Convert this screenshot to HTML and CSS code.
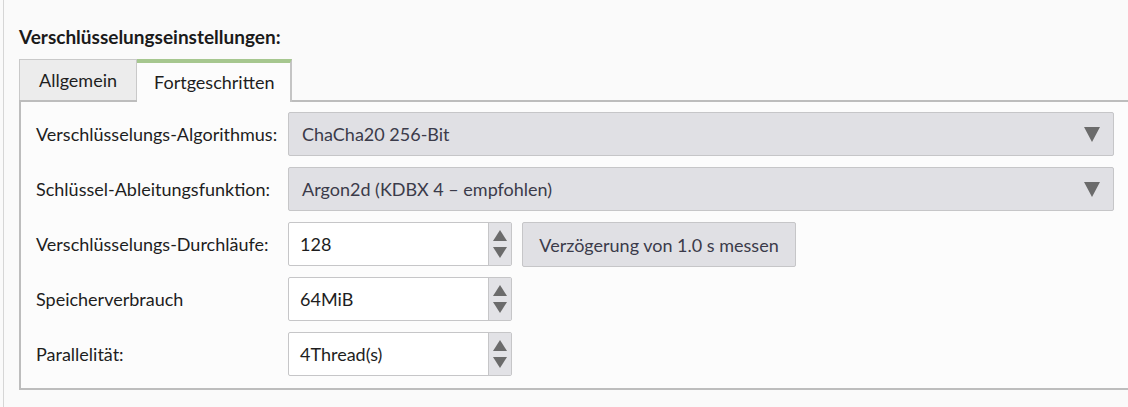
FILE: index.html
```html
<!DOCTYPE html>
<html lang="de">
  <head>
    <meta charset="UTF-8" />
    <meta name="viewport" content="width=device-width, initial-scale=1.0" />
    <title>Verschlüsselungseinstellungen</title>
    <link rel="stylesheet" href="styles.css">
  </head>
  <body>
    <div class="page">
      <h1 class="section-title">Verschlüsselungseinstellungen:</h1>

      <div class="tabs">
        <div class="tab">Allgemein</div>
        <div class="tab active">Fortgeschritten</div>
      </div>

      <div class="panel">
        <div class="form-grid">
          <label class="field-label">Verschlüsselungs-Algorithmus:</label>
          <div class="combo">
            <span>ChaCha20 256-Bit</span>
            <span class="combo-arrow"></span>
          </div>

          <label class="field-label">Schlüssel-Ableitungsfunktion:</label>
          <div class="combo">
            <span>Argon2d (KDBX 4 – empfohlen)</span>
            <span class="combo-arrow"></span>
          </div>

          <label class="field-label">Verschlüsselungs-Durchläufe:</label>
          <div class="row">
            <div class="spinbox">
              <span class="spin-value">128</span>
              <span class="spin-buttons"><i class="up"></i><i class="down"></i></span>
            </div>
            <button class="btn">Verzögerung von 1.0 s messen</button>
          </div>

          <label class="field-label">Speicherverbrauch</label>
          <div class="row">
            <div class="spinbox">
              <span class="spin-value">64MiB</span>
              <span class="spin-buttons"><i class="up"></i><i class="down"></i></span>
            </div>
          </div>

          <label class="field-label">Parallelität:</label>
          <div class="row">
            <div class="spinbox">
              <span class="spin-value">4Thread(s)</span>
              <span class="spin-buttons"><i class="up"></i><i class="down"></i></span>
            </div>
          </div>
        </div>
      </div>
    </div>
  </body>
</html>
```

FILE: styles.css
```css
body {
  margin: 0;
  background: #fafafa;
  font-family: Lato, "Liberation Sans", sans-serif;
  font-size: 18px;
  color: #1e1e1e;
  overflow: hidden;
  height: 407px;
}
.page {
  margin-left: 3px;
  border-left: 1px solid #d6d6d6;
  padding: 27px 0 0 15px;
  height: 380px;
  width: 1150px;
}
.section-title {
  margin: 0 0 12px 0;
  font-size: 19px;
  font-weight: bold;
  line-height: 20px;
  color: #1a1a1a;
}
.tabs {
  display: flex;
  height: 41px;
  position: relative;
  z-index: 1;
}
.tab {
  box-sizing: border-box;
  height: 41px;
  padding: 0 19px;
  display: flex;
  align-items: center;
  background: #ececec;
  border: 1px solid #c9c9c9;
  border-bottom: none;
}
.tab.active {
  height: 43px;
  background: #fcfcfc;
  border-top: 4px solid #a6c78f;
  border-left: none;
  border-right: 2px solid #c4c4c4;
  padding: 0 16px 2px 17px;
}
.panel {
  box-sizing: border-box;
  border: 2px solid #bdbdbd;
  background: #fcfcfc;
  width: 1130px;
  padding: 10px 0 12px 15px;
}
.form-grid {
  display: grid;
  grid-template-columns: 252px auto;
  grid-auto-rows: 44px;
  row-gap: 11px;
  align-items: center;
}
.field-label {
  white-space: nowrap;
}
.combo {
  box-sizing: border-box;
  width: 826px;
  height: 44px;
  background: #e0e0e4;
  border: 1px solid #c6c6c8;
  border-radius: 2px;
  display: flex;
  align-items: center;
  justify-content: space-between;
  padding: 0 13px 0 13px;
  color: #3b3b4a;
}
.combo-arrow {
  width: 0;
  height: 0;
  border-left: 8px solid transparent;
  border-right: 8px solid transparent;
  border-top: 15px solid #6b6b6b;
}
.row {
  display: flex;
  gap: 10px;
  height: 44px;
}
.spinbox {
  box-sizing: border-box;
  width: 224px;
  height: 44px;
  background: #ffffff;
  border: 1px solid #c6c6c8;
  border-radius: 2px;
  display: flex;
}
.spin-value {
  flex: 1;
  display: flex;
  align-items: center;
  padding-left: 11px;
  color: #1e1e1e;
}
.spin-buttons {
  width: 22px;
  background: #e2e2e6;
  border-left: 1px solid #c6c6c8;
  display: flex;
  flex-direction: column;
  align-items: center;
  justify-content: center;
  gap: 6px;
}
.spin-buttons i {
  width: 0;
  height: 0;
  border-left: 7px solid transparent;
  border-right: 7px solid transparent;
}
.spin-buttons .up {
  border-bottom: 11px solid #6b6b6b;
}
.spin-buttons .down {
  border-top: 11px solid #6b6b6b;
}
.btn {
  box-sizing: border-box;
  width: 274px;
  height: 45px;
  background: #e0e0e4;
  border: 1px solid #c6c6c8;
  border-radius: 2px;
  font-family: inherit;
  font-size: 18px;
  color: #3b3b4a;
  padding: 0;
}
```
